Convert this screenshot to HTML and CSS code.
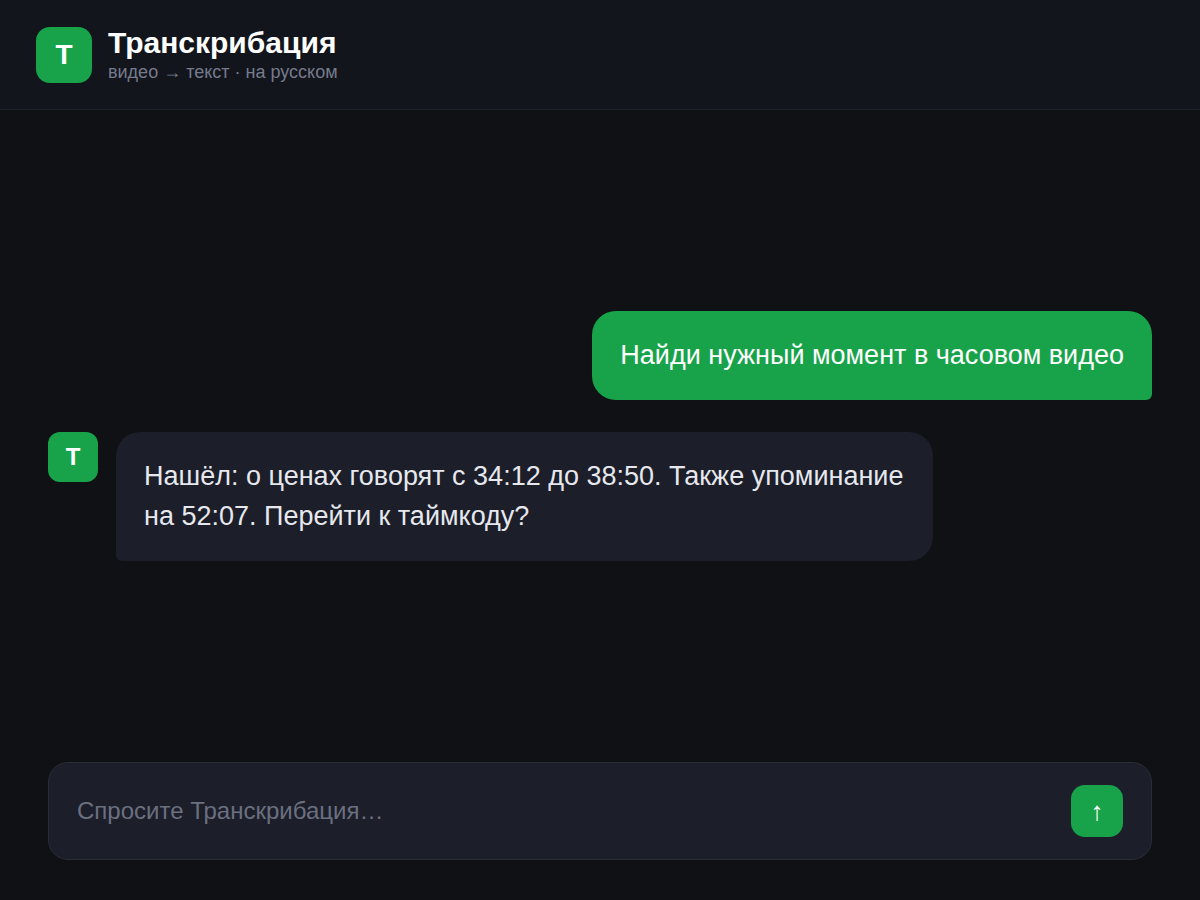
FILE: index.html
```html
<!DOCTYPE html>
<html lang="ru">
<head>
    <meta charset="UTF-8">
    <meta name="viewport" content="width=device-width, initial-scale=1.0">
    <title>Транскрибация</title>
    <link rel="stylesheet" href="styles.css">
</head>
<body>
    <header class="header">
        <div class="logo">Т</div>
        <div>
            <h1 class="title">Транскрибация</h1>
            <p class="subtitle">видео → текст · на русском</p>
        </div>
    </header>

    <main class="chat">
        <div class="message user">
            <p class="bubble">Найди нужный момент в часовом видео</p>
        </div>
        <div class="message bot">
            <div class="avatar">Т</div>
            <p class="bubble">Нашёл: о ценах говорят с 34:12 до 38:50. Также упоминание на 52:07. Перейти к таймкоду?</p>
        </div>
    </main>

    <form class="composer">
        <input class="composer-input" type="text" placeholder="Спросите Транскрибация…" aria-label="Сообщение">
        <button class="send" type="submit" aria-label="Отправить">↑</button>
    </form>
</body>
</html>
```

FILE: styles.css
```css
* {
    box-sizing: border-box;
}
body {
    display: flex;
    flex-direction: column;
    min-height: 100vh;
    margin: 0;
    background: #0f1115;
    color: #e6e8ee;
    font-family: "Liberation Sans", Arial, sans-serif;
}
h1, p {
    margin: 0;
}

.header {
    display: flex;
    align-items: center;
    gap: 16px;
    padding: 26px 36px 25px;
    background: #12151c;
    border-bottom: 1px solid #1f222c;
}
.logo, .avatar {
    display: flex;
    align-items: center;
    justify-content: center;
    flex-shrink: 0;
    background: #18a34a;
    color: #fff;
    font-weight: bold;
}
.logo {
    width: 56px;
    height: 56px;
    border-radius: 14px;
    font-size: 28px;
}
.title {
    color: #fff;
    font-size: 30px;
    line-height: 34px;
}
.subtitle {
    color: #767b8c;
    font-size: 18px;
    line-height: 24px;
}

.chat {
    display: flex;
    flex: 1;
    flex-direction: column;
    justify-content: center;
    gap: 32px;
    padding: 0 48px;
}
.message {
    display: flex;
    gap: 18px;
}
.user {
    justify-content: flex-end;
}
.avatar {
    width: 50px;
    height: 50px;
    border-radius: 12px;
    font-size: 24px;
}
.bubble {
    max-width: 74%;
    padding: 24px 28px 25px;
    border-radius: 24px;
    font-size: 27px;
    line-height: 40px;
}
.user .bubble {
    background: #18a34a;
    border-bottom-right-radius: 6px;
    color: #fff;
}
.bot .bubble {
    background: #1c1e29;
    border-bottom-left-radius: 6px;
}

.composer {
    display: flex;
    align-items: center;
    gap: 16px;
    margin: 0 48px 40px;
    padding: 22px 28px;
    background: #1c1e29;
    border: 1px solid #2a2d38;
    border-radius: 20px;
}
.composer-input {
    flex: 1;
    min-width: 0;
    padding: 0;
    background: none;
    border: none;
    outline: none;
    color: #e6e8ee;
    font-family: inherit;
    font-size: 24px;
}
.composer-input::placeholder {
    color: #6b7080;
}
.send {
    width: 52px;
    height: 52px;
    padding: 0;
    background: #18a34a;
    border: none;
    border-radius: 14px;
    color: #fff;
    cursor: pointer;
    font-family: inherit;
    font-size: 26px;
}
```
